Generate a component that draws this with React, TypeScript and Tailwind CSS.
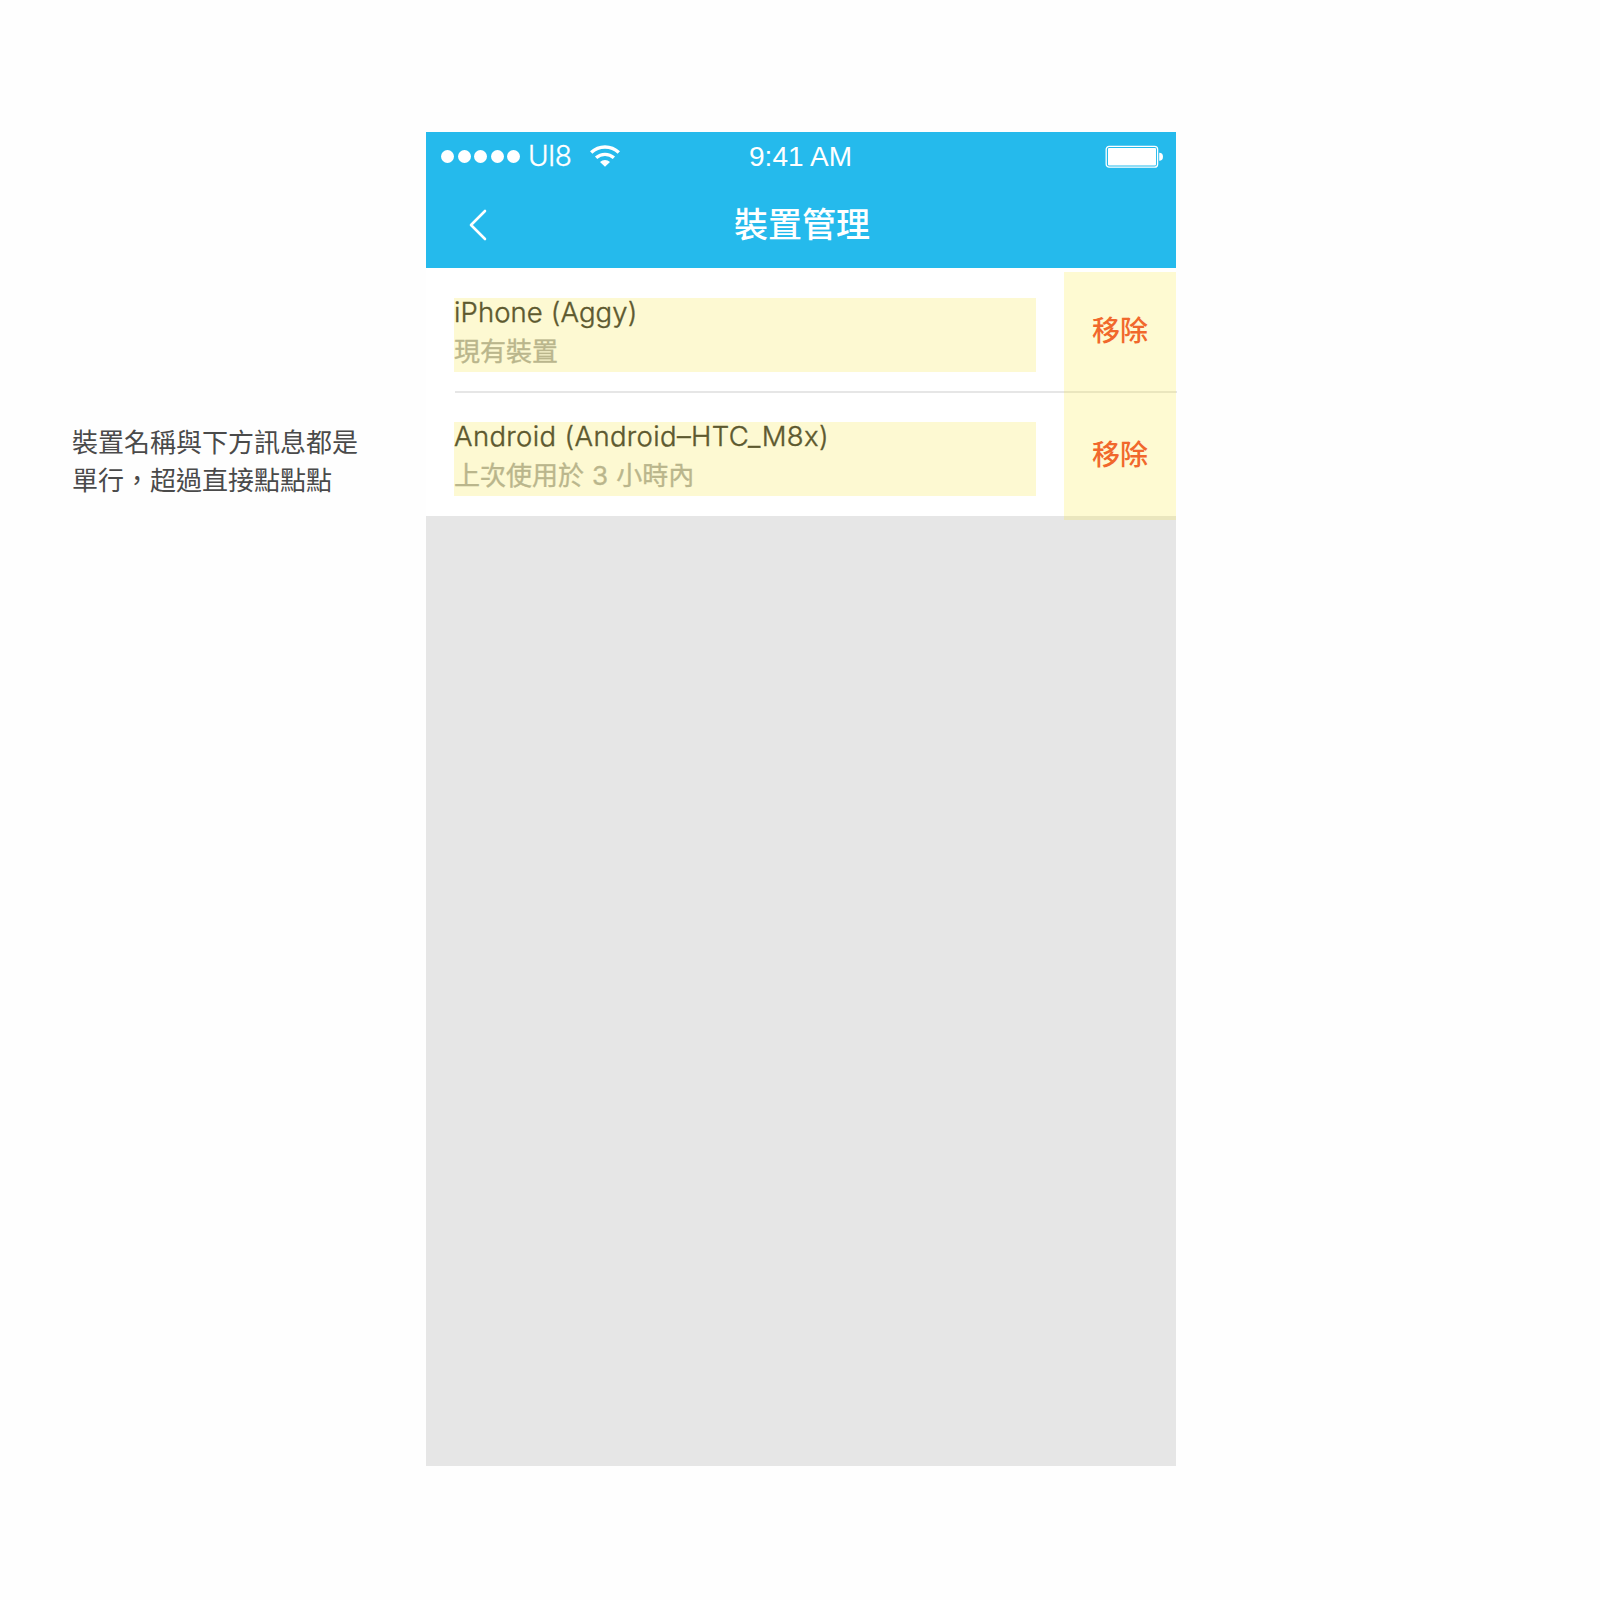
const devices = [
  { name: 'iPhone (Aggy)', status: '現有裝置', spacing: 'tracking-[0.1px]' },
  { name: 'Android (Android–HTC_M8x)', status: '上次使用於 3 小時內', spacing: 'tracking-[0.36px]' },
];

function StatusBar() {
  return (
    <div className="flex h-[49px] items-center justify-between pl-[15px] pr-[13px] text-white">
      <div className="flex w-[300px] items-center">
        <div className="flex gap-[3.5px]">
          {[0, 1, 2, 3, 4].map((i) => (
            <span key={i} className="size-[13px] rounded-full bg-white" />
          ))}
        </div>
        <span className="-mt-[2px] ml-[8px] w-[46px] font-['Inter'] text-[28px] font-light leading-none tracking-[-0.6px] [-webkit-text-stroke:0.3px]">UI8</span>
        <svg className="-mt-[1px] ml-[15.5px] h-[22px] w-[30px]" viewBox="0 0 30 22" fill="none">
          <path d="M1.2 7.6C9 .2 21 .2 28.8 7.6" stroke="white" strokeWidth="3.4" />
          <path d="M6.1 12.8C11.2 8.2 18.8 8.2 23.9 12.8" stroke="white" strokeWidth="3.4" />
          <path d="M10 17C12.9 14.2 17.1 14.2 20 17L15 21.8Z" fill="white" />
        </svg>
      </div>
      <span className="-ml-[3px] font-['Liberation_Sans'] text-[28px] leading-none tracking-[0.05px]">9:41 AM</span>
      <div className="flex w-[300px] items-center justify-end">
        <svg className="h-[24px] w-[58px]" viewBox="0 0 58 24" fill="none">
          <rect x="1.2" y="1.3" width="51.4" height="20.9" rx="3" stroke="white" strokeWidth="1.3" />
          <rect x="3" y="3" width="48" height="17.6" rx="1" fill="white" />
          <path d="M54.2 7.8a3.8 4 0 0 1 0 8Z" fill="white" />
        </svg>
      </div>
    </div>
  );
}

function DeviceRow({ name, status, spacing }: { name: string; status: string; spacing: string }) {
  return (
    <div className="flex h-[124px] items-start">
      <div className="ml-[28px] mt-[30px] h-[74px] w-[582px] bg-[#fdf9d2]">
        <p className={`h-[37px] whitespace-nowrap font-['Inter'] text-[27.5px] font-light leading-[28px] text-[#5d592f] [-webkit-text-stroke:0.4px] ${spacing}`}>{name}</p>
        <p className="h-[37px] whitespace-nowrap font-['Inter','Noto_Sans_CJK_TC',sans-serif] text-[26px] leading-[34px] text-[#bab68c] [-webkit-text-stroke:0.35px] [word-spacing:0.8px]">{status}</p>
      </div>
      <button className="relative z-10 ml-[28px] h-[122px] w-[112px] font-['Noto_Sans_CJK_TC',sans-serif] text-[28px] font-medium text-[#f1682c]">
        移除
      </button>
    </div>
  );
}

export default function App() {
  return (
    <main className="flex h-[1600px] w-[1600px] items-start bg-[#fefefe] pt-[132px]">
      <p className="ml-[72px] mt-[290px] w-[354px] font-['Noto_Sans_CJK_TC',sans-serif] text-[26px] leading-[38px] text-[#4a4a4a]">
        裝置名稱與下方訊息都是
        <br />
        單行，超過直接點點點
      </p>
      <div className="flex h-[1334px] w-[750px] flex-col bg-[#e6e6e6]">
        <header className="h-[136px] bg-[#25baec]">
          <StatusBar />
          <div className="flex h-[88px] items-center justify-between px-[43px]">
            <svg className="h-[32px] w-[18px]" viewBox="0 0 18 32" fill="none">
              <path d="M16 2 2 16l14 14" stroke="white" strokeWidth="2.6" strokeLinecap="round" strokeLinejoin="round" />
            </svg>
            <h1 className="-mt-[4px] ml-[2px] font-['Noto_Sans_CJK_TC',sans-serif] text-[34px] font-medium leading-none text-white">裝置管理</h1>
            <span className="w-[18px]" />
          </div>
        </header>
        <section className="relative h-[248px] bg-white">
          <DeviceRow {...devices[0]} />
          <div className="-mb-px -mt-px ml-[29px] h-[2px] w-[722px] bg-[#e6e6e6]" />
          <DeviceRow {...devices[1]} />
          <div className="absolute right-0 top-[4px] h-[248px] w-[112px] bg-[#f8e71c]/20" />
        </section>
      </div>
    </main>
  );
}
